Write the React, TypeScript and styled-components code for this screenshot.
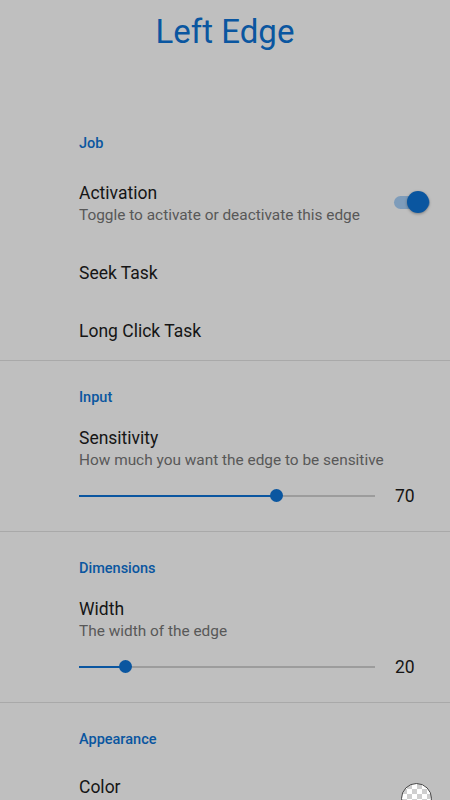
import React from "react";
import styled, { createGlobalStyle } from "styled-components";

const Global = createGlobalStyle`
  html, body { margin: 0; padding: 0; background: #bfbfbf; }
  body { font-family: Roboto, "Noto Sans", sans-serif; -webkit-font-smoothing: antialiased; }
  * { box-sizing: border-box; }
`;

const BLUE = "#0a56a0";

const Page = styled.div`
  width: 450px;
  height: 800px;
  overflow: hidden;
  background: #bfbfbf;
  display: flex;
  flex-direction: column;
`;

const Header = styled.header`
  flex-shrink: 0;
  height: 107px;
  padding-top: 12px;
  display: flex;
  justify-content: center;
  align-items: flex-start;
`;

const Title = styled.h1`
  margin: 0;
  font-size: 33px;
  line-height: 40px;
  font-weight: 400;
  color: ${BLUE};
`;

const Section = styled.section<{ $divider?: boolean }>`
  flex-shrink: 0;
  display: flex;
  flex-direction: column;
  border-bottom: ${(p) => (p.$divider ? "1px solid #a9a9a9" : "none")};
`;

const CategoryLabel = styled.div`
  padding: 27px 20px 1px 79px;
  font-size: 14.5px;
  line-height: 20px;
  font-weight: 500;
  color: ${BLUE};
`;

const Item = styled.div<{ $pt: number; $pb: number; $top?: boolean }>`
  display: flex;
  align-items: ${(p) => (p.$top ? "flex-start" : "center")};
  padding: ${(p) => p.$pt}px 20px ${(p) => p.$pb}px 79px;
`;

const TextBlock = styled.div`
  flex: 1;
  display: flex;
  flex-direction: column;
  min-width: 0;
`;

const ItemTitle = styled.div`
  font-size: 17.5px;
  line-height: 24px;
  color: #151515;
`;

const Summary = styled.div`
  font-size: 15.4px;
  line-height: 20px;
  color: #585858;
`;

const SwitchTrack = styled.div`
  position: relative;
  width: 36px;
  height: 13px;
  border-radius: 7px;
  background: #7e9cba;
  margin-top: -2px;
`;

const SwitchThumb = styled.div`
  position: absolute;
  right: 1px;
  top: 50%;
  width: 22px;
  height: 22px;
  margin-top: -11px;
  border-radius: 50%;
  background: ${BLUE};
  box-shadow: 0 1px 3px rgba(0, 0, 0, 0.35);
`;

const SliderRow = styled.div`
  display: flex;
  align-items: center;
  height: 32px;
  margin-top: 10px;
`;

const Track = styled.div`
  position: relative;
  width: 296px;
  height: 2px;
  background: #9c9c9c;
`;

const TrackFill = styled.div`
  position: absolute;
  left: 0;
  top: 0;
  height: 2px;
  background: ${BLUE};
`;

const Thumb = styled.div`
  position: absolute;
  top: 50%;
  width: 13px;
  height: 13px;
  margin: -6.5px 0 0 -6.5px;
  border-radius: 50%;
  background: ${BLUE};
`;

const SliderValue = styled.div`
  margin-left: 20px;
  font-size: 17.5px;
  line-height: 24px;
  color: #151515;
`;

const ColorSwatch = styled.div`
  flex-shrink: 0;
  width: 31px;
  height: 31px;
  border-radius: 50%;
  border: 1.5px solid #4a4a4a;
  background: repeating-conic-gradient(#cfcfcf 0 25%, #ffffff 0 50%) 0 0 / 10px 10px;
  margin-right: -2px;
  margin-top: 8px;
`;

function Slider({ pct, value }: { pct: number; value: number }) {
  return (
    <SliderRow>
      <Track>
        <TrackFill style={{ width: `${pct}%` }} />
        <Thumb style={{ left: `${pct}%` }} />
      </Track>
      <SliderValue>{value}</SliderValue>
    </SliderRow>
  );
}

export default function App() {
  return (
    <Page>
      <Global />
      <Header>
        <Title>Left Edge</Title>
      </Header>

      <Section $divider>
        <CategoryLabel>Job</CategoryLabel>
        <Item $pt={26} $pb={18.5}>
          <TextBlock>
            <ItemTitle>Activation</ItemTitle>
            <Summary>Toggle to activate or deactivate this edge</Summary>
          </TextBlock>
          <SwitchTrack>
            <SwitchThumb />
          </SwitchTrack>
        </Item>
        <Item $pt={17.5} $pb={16.5}>
          <TextBlock>
            <ItemTitle>Seek Task</ItemTitle>
          </TextBlock>
        </Item>
        <Item $pt={17.5} $pb={16.5}>
          <TextBlock>
            <ItemTitle>Long Click Task</ItemTitle>
          </TextBlock>
        </Item>
      </Section>

      <Section $divider>
        <CategoryLabel>Input</CategoryLabel>
        <Item $pt={17} $pb={19}>
          <TextBlock>
            <ItemTitle>Sensitivity</ItemTitle>
            <Summary>How much you want the edge to be sensitive</Summary>
            <Slider pct={66.8} value={70} />
          </TextBlock>
        </Item>
      </Section>

      <Section $divider>
        <CategoryLabel>Dimensions</CategoryLabel>
        <Item $pt={17} $pb={19}>
          <TextBlock>
            <ItemTitle>Width</ItemTitle>
            <Summary>The width of the edge</Summary>
            <Slider pct={15.8} value={20} />
          </TextBlock>
        </Item>
      </Section>

      <Section>
        <CategoryLabel>Appearance</CategoryLabel>
        <Item $pt={24} $pb={16} $top>
          <TextBlock>
            <ItemTitle>Color</ItemTitle>
          </TextBlock>
          <ColorSwatch />
        </Item>
      </Section>
    </Page>
  );
}
